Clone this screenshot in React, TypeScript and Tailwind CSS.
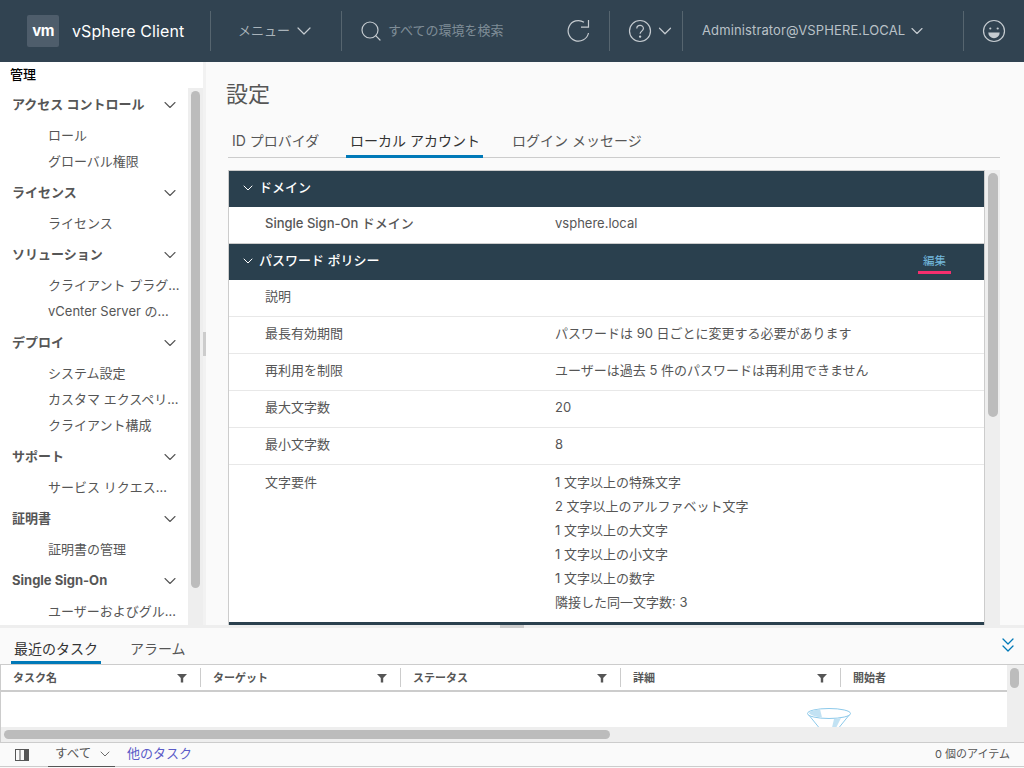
import React from "react";
import { ChevronDown, ChevronsDown, Search } from "lucide-react";

const font = { fontFamily: '"Inter","Noto Sans CJK JP",sans-serif' };

const nav: { h: string; items: string[] }[] = [
  { h: "アクセス コントロール", items: ["ロール", "グローバル権限"] },
  { h: "ライセンス", items: ["ライセンス"] },
  { h: "ソリューション", items: ["クライアント プラグ…", "vCenter Server の…"] },
  { h: "デプロイ", items: ["システム設定", "カスタマ エクスペリ…", "クライアント構成"] },
  { h: "サポート", items: ["サービス リクエス…"] },
  { h: "証明書", items: ["証明書の管理"] },
  { h: "Single Sign-On", items: ["ユーザーおよびグル…"] },
];

const policy: [string, string][] = [
  ["説明", ""],
  ["最長有効期間", "パスワードは 90 日ごとに変更する必要があります"],
  ["再利用を制限", "ユーザーは過去 5 件のパスワードは再利用できません"],
  ["最大文字数", "20"],
  ["最小文字数", "8"],
];

const reqs = [
  "1 文字以上の特殊文字",
  "2 文字以上のアルファベット文字",
  "1 文字以上の大文字",
  "1 文字以上の小文字",
  "1 文字以上の数字",
  "隣接した同一文字数: 3",
];

const cols: [string, string][] = [
  ["タスク名", "w-[200px]"],
  ["ターゲット", "w-[200px]"],
  ["ステータス", "w-[220px]"],
  ["詳細", "w-[220px]"],
];

function Sep() {
  return <div className="w-px h-10 bg-[#56656f] shrink-0" />;
}

function Filter() {
  return (
    <svg width="10" height="10" viewBox="0 0 10 10" className="shrink-0">
      <path d="M0 1h10L6.2 5v4.5H3.8V5z" fill="#565656" />
    </svg>
  );
}

function SectionHead({ title, edit }: { title: string; edit?: boolean }) {
  return (
    <div className="h-9 bg-[#2a404e] flex items-center pl-[11px] pb-[2px] shrink-0">
      <ChevronDown size={16} strokeWidth={1.5} className="text-white" />
      <span className="ml-[3px] text-[13px] font-medium text-white">{title}</span>
      {edit && (
        <span className="ml-auto mr-[33px] w-[33px] h-[26px] pt-[5px] border-b-[3px] border-[#f52f6e] text-[11.5px] leading-[16px] text-[#74bade] text-center">
          編集
        </span>
      )}
    </div>
  );
}

function Row({ label, value }: { label: string; value: string }) {
  return (
    <div className="h-[37px] flex items-center pb-[2px] border-b border-[#e8e8e8] text-[13px] text-[#565656] shrink-0">
      <span className="w-[326px] pl-9">{label}</span>
      <span>{value}</span>
    </div>
  );
}

export default function App() {
  return (
    <div style={font} className="w-[1024px] h-[768px] overflow-hidden flex flex-col bg-[#fafafa]">
      <header className="h-[62px] shrink-0 bg-[#314351] flex items-center text-[#c5cbd0]">
        <div className="ml-[27px] w-8 h-8 rounded-[2px] bg-[#4e5d6b] flex items-center justify-center">
          <span className="text-white font-bold text-[15px] tracking-[-0.5px]">vm</span>
        </div>
        <span className="ml-[13px] w-[138px] text-[16px] tracking-[0.1px] text-white">vSphere Client</span>
        <Sep />
        <span className="ml-[27px] text-[13px] text-[#a9b3ba]">メニュー</span>
        <ChevronDown size={24} strokeWidth={1.2} className="ml-[2px] text-[#c5cbd0]" />
        <div className="w-[25px]" />
        <Sep />
        <Search size={24} strokeWidth={1.2} className="ml-[17px] text-[#c5cbd0]" />
        <span className="ml-[5px] text-[13px] text-[#7f8d97] w-[179px]">すべての環境を検索</span>
        <svg width="24" height="24" viewBox="0 0 24 24" fill="none" stroke="#c5cbd0" strokeWidth="1.2">
          <path d="M21.5 14A10.3 10.3 0 1 1 17 3.2" />
          <path d="M14 8.2h7.5V1" />
        </svg>
        <div className="w-[18px]" />
        <Sep />
        <svg width="24" height="24" viewBox="0 0 24 24" fill="none" stroke="#c5cbd0" strokeWidth="1.2" className="ml-[18px]">
          <circle cx="12" cy="12" r="10.5" />
          <path d="M8.8 9.5c0-4.2 6.6-4.2 6.6 0 0 2.6-3.3 2.6-3.3 5.3" />
          <circle cx="12.1" cy="17.6" r=".6" fill="#c5cbd0" />
        </svg>
        <ChevronDown size={22} strokeWidth={1.3} className="ml-[2px] text-[#c5cbd0]" />
        <div className="w-[6px]" />
        <Sep />
        <span className="ml-[19px] text-[13px] tracking-[0.12px] text-[#b9c1c7] w-[205px] whitespace-nowrap">Administrator@VSPHERE.LOCAL</span>
        <ChevronDown size={20} strokeWidth={1.4} className="text-[#c5cbd0]" />
        <div className="w-[36px]" />
        <Sep />
        <svg width="24" height="24" viewBox="0 0 24 24" fill="none" stroke="#c5cbd0" strokeWidth="1.2" className="ml-[18px]">
          <circle cx="12" cy="12" r="10.5" />
          <circle cx="8.3" cy="9.5" r="1.1" fill="#c5cbd0" stroke="none" />
          <circle cx="15.7" cy="9.5" r="1.1" fill="#c5cbd0" stroke="none" />
          <path d="M6.3 13.5h11.4a5.7 5.7 0 0 1-11.4 0z" fill="#c5cbd0" stroke="none" />
        </svg>
      </header>

      <div className="flex h-[563px] shrink-0 overflow-hidden">
        <aside className="w-[203px] shrink-0 bg-white flex flex-col overflow-hidden">
          <div className="h-[26px] shrink-0 pl-[10px] pt-[3px] text-[13px] leading-[19px] font-medium text-black">管理</div>
          <div className="flex flex-1 min-h-0">
            <div className="w-[188px] shrink-0 overflow-hidden">
              {nav.map((g) => (
                <div key={g.h}>
                  <div className="h-[31px] flex items-center justify-between pt-[3px] pl-3 pr-[8px] text-[13px] font-bold text-[#565656]">
                    <span>{g.h}</span>
                    <ChevronDown size={20} strokeWidth={1.3} className="text-[#565656]" />
                  </div>
                  <div className="pt-[4px] pb-px">
                    {g.items.map((i) => (
                      <div key={i} className="h-[26px] pl-12 flex items-center text-[13px] text-[#565656] whitespace-nowrap">
                        {i}
                      </div>
                    ))}
                  </div>
                </div>
              ))}
            </div>
            <div className="w-[15px] bg-[#eeeeee] shrink-0 pl-[3px] pt-[3px]">
              <div className="w-[9px] h-[497px] rounded-[5px] bg-[#bcbcbc]" />
            </div>
          </div>
        </aside>
        <div className="w-[3px] shrink-0 bg-[#f2f2f2] flex items-center">
          <div className="w-[3px] h-6 bg-[#cccccc]" />
        </div>
        <main className="flex-1 min-w-0 flex flex-col pl-[22px] pr-6 overflow-hidden">
          <h1 className="h-[62px] shrink-0 pt-[16px] -ml-[2px] text-[22px] leading-[33px] text-[#565656]">設定</h1>
          <div className="h-[34px] shrink-0 flex border-b border-[#cccccc] text-[14px] text-[#565656]">
            <span className="pl-[4px] w-[118px] pt-[6px]">ID プロバイダ</span>
            <span className="w-[137px] h-[34px] border-b-[3px] border-[#0079b8] pt-[6px] pl-px text-center text-[#333333]">ローカル アカウント</span>
            <span className="ml-[29px] pt-[6px]">ログイン メッセージ</span>
          </div>
          <div className="mt-[12px] flex flex-1 min-h-0">
            <div className="w-[757px] shrink-0 bg-white border-x border-t border-[#cccccc] flex flex-col overflow-hidden">
              <SectionHead title="ドメイン" />
              <div className="h-[37px] flex items-center pb-[2px] text-[13px] text-[#565656] shrink-0 border-b border-[#cccccc]">
                <span className="w-[326px] pl-9 font-medium">Single Sign-On ドメイン</span>
                <span>vsphere.local</span>
              </div>
              <SectionHead title="パスワード ポリシー" edit />
              {policy.map(([l, v]) => (
                <Row key={l} label={l} value={v} />
              ))}
              <div className="flex pt-[4.5px] text-[13px] text-[#565656] leading-6 h-[157px] shrink-0">
                <span className="w-[326px] pl-9">文字要件</span>
                <div>
                  {reqs.map((r) => (
                    <div key={r}>{r}</div>
                  ))}
                </div>
              </div>
              <div className="h-9 bg-[#2a404e] shrink-0" />
            </div>
            <div className="w-[15px] bg-[#eeeeee] shrink-0 pl-[3px] pt-[3px]">
              <div className="w-[10px] h-[244px] rounded-[5px] bg-[#bcbcbc]" />
            </div>
          </div>
        </main>
      </div>

      <div className="h-[3px] shrink-0 bg-[#eeeeee] flex justify-center">
        <div className="w-6 h-[3px] bg-[#cccccc]" />
      </div>

      <section className="flex-1 min-h-0 flex flex-col">
        <div className="h-[36px] shrink-0 flex items-end relative text-[14px] text-[#565656]">
          <span className="ml-[11px] w-[90px] h-[33px] border-b-[3px] border-[#0079b8] text-center pt-[7px] text-[#333333]">最近のタスク</span>
          <span className="ml-[29px] h-[33px] pt-[7px]">アラーム</span>
          <ChevronsDown size={24} strokeWidth={1.3} className="absolute right-[4px] top-[5px] text-[#0079b8]" />
        </div>
        <div className="h-[79px] shrink-0 bg-white border border-[#cccccc] border-r-0 flex flex-col overflow-hidden">
          <div className="flex flex-1 min-h-0">
            <div className="w-[1006px] shrink-0 flex flex-col overflow-hidden">
              <div className="h-[27px] shrink-0 flex items-center border-b-2 border-[#cccccc] text-[11px] font-bold text-[#565656]">
                {cols.map(([c, w]) => (
                  <div key={c} className={`${w} shrink-0 flex items-center h-[19px] justify-between pt-px pl-3 pr-[13px] border-r border-[#cccccc]`}>
                    <span>{c}</span>
                    <Filter />
                  </div>
                ))}
                <span className="pl-3 pt-px">開始者</span>
              </div>
              <div className="flex-1 flex justify-end overflow-hidden pr-[155px] pt-[15px]">
                <svg width="46" height="34" viewBox="0 0 46 34" fill="none" className="shrink-0">
                  <path d="M2 7 L19 28 H27 L44 7" stroke="#8cc9ea" strokeWidth="1" fill="#fff" />
                  <ellipse cx="23" cy="6.5" rx="21.5" ry="5" fill="#fff" stroke="#8cc9ea" strokeWidth="1" />
                  <path d="M4 4.5 Q10 2.5 14 2 L16 10.5 Q8 10 3 6.5z" fill="#c2e2f3" />
                  <path d="M28 12 L35 11 L28 25 H25z" fill="#c2e2f3" />
                </svg>
              </div>
            </div>
            <div className="w-[17px] bg-[#eeeeee] shrink-0 pl-[3px] pt-[3px]">
              <div className="w-[9px] h-[20px] rounded-[5px] bg-[#bcbcbc]" />
            </div>
          </div>
          <div className="h-[15px] shrink-0 bg-[#eeeeee] pl-[3px] pt-[3px]">
            <div className="w-[606px] h-[9px] rounded-[5px] bg-[#bcbcbc]" />
          </div>
        </div>
        <div className="h-[24px] shrink-0 border-b border-[#cccccc] flex items-center text-[13px] text-[#565656]">
          <svg width="14" height="12" viewBox="0 0 14 12" className="ml-[15px]">
            <rect x=".5" y=".5" width="13" height="11" fill="none" stroke="#565656" />
            <path d="M5 0v12M9.5 0v12" stroke="#565656" />
            <rect x="9.5" y="0" width="4.5" height="12" fill="#565656" />
          </svg>
          <div className="ml-[19px] w-[67px] h-[24px] border-b border-[#565656] flex items-center pl-[7px]">
            <span className="text-[12.5px]">すべて</span>
            <ChevronDown size={16} strokeWidth={1.3} className="ml-[6px]" />
          </div>
          <span className="ml-[12px] text-[13px] text-[#5b5bc8] mb-[2px]">他のタスク</span>
          <span className="ml-auto mr-[14px] text-[11px]">0 個のアイテム</span>
        </div>
      </section>
    </div>
  );
}
